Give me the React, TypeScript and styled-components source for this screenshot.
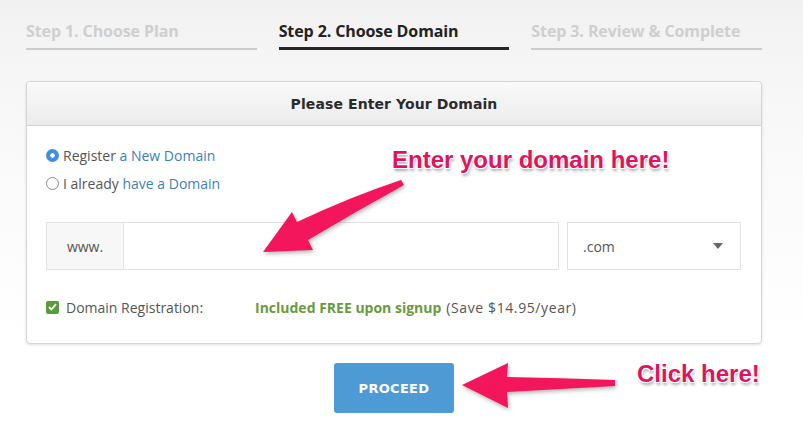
import styled, { createGlobalStyle } from "styled-components";

const GlobalStyle = createGlobalStyle`
    html, body {
        margin: 0;
        padding: 0;
        background: #fff;
    }
    * { box-sizing: border-box; }
`;

const Page = styled.div`
    position: relative;
    width: 803px;
    height: 435px;
    overflow: hidden;
    padding: 0 41px 0 26px;
    background: linear-gradient(180deg, #f1f1f1 0px, #f6f6f6 70px, #fbfbfb 200px, #fff 340px);
    font-family: "Open Sans", "Liberation Sans", sans-serif;
`;

const Steps = styled.div`
    display: grid;
    grid-template-columns: repeat(3, 1fr);
    column-gap: 22px;
    padding-top: 20px;
`;

const Step = styled.div<{ $active?: boolean }>`
    font-size: 16px;
    font-weight: 700;
    letter-spacing: -0.1px;
    color: ${(p) => (p.$active ? "#222" : "#cfcfcf")};
    line-height: 22px;
    padding-bottom: 6px;
    border-bottom: ${(p) => (p.$active ? "3px solid #262626" : "2px solid #cccccc")};
    height: 30px;
    white-space: nowrap;
`;

const Card = styled.div`
    margin-top: 31px;
    background: #fff;
    border: 1px solid #d6d6d6;
    border-radius: 4px;
    box-shadow: 0 1px 3px rgba(0, 0, 0, 0.12);
`;

const CardHeader = styled.div`
    height: 44px;
    display: flex;
    align-items: center;
    justify-content: center;
    background: linear-gradient(180deg, #f9f9f9, #ececec);
    border-bottom: 1px solid #cfcfcf;
    border-radius: 4px 4px 0 0;
    font-family: "DejaVu Sans", "Liberation Sans", sans-serif;
    font-weight: 700;
    font-size: 14px;
    letter-spacing: 0.1px;
    color: #2b2b2b;
`;

const CardBody = styled.div`
    padding: 15px 20px 22px 19px;
`;

const RadioRow = styled.label`
    display: flex;
    align-items: center;
    gap: 4px;
    height: 28px;
    font-size: 14px;
    color: #555;
`;

const Radio = styled.span<{ $checked?: boolean }>`
    width: 13px;
    height: 13px;
    border-radius: 50%;
    ${(p) =>
        p.$checked
            ? `background: radial-gradient(circle, #fff 0 2px, #3d8fe0 2.5px);`
            : `border: 1px solid #8a8a8a; background: #fff;`}
`;

const Link = styled.span`
    color: #3f7fb5;
`;

const InputGroup = styled.div`
    display: flex;
    gap: 8px;
    margin-top: 25px;
    height: 48px;
`;

const DomainBox = styled.div`
    flex: 1;
    display: flex;
    border: 1px solid #e2e2e2;
`;

const Prefix = styled.div`
    width: 77px;
    display: flex;
    align-items: center;
    justify-content: center;
    background: #f7f7f7;
    border-right: 1px solid #e2e2e2;
    color: #555;
    font-size: 14px;
`;

const DomainInput = styled.input`
    flex: 1;
    border: none;
    outline: none;
    background: #fff;
`;

const Select = styled.div`
    width: 174px;
    display: flex;
    align-items: center;
    justify-content: space-between;
    padding: 0 17px 0 15px;
    border: 1px solid #e2e2e2;
    color: #555;
    font-size: 14px;
`;

const CheckRow = styled.div`
    display: flex;
    align-items: center;
    height: 28px;
    margin-top: 23px;
    font-size: 14px;
    color: #555;
`;

const CheckBox = styled.span`
    width: 13px;
    height: 13px;
    border-radius: 2px;
    background: #5a9b3c;
    display: flex;
    align-items: center;
    justify-content: center;
    margin-right: 7px;
`;

const CheckLabel = styled.span`
    width: 189px;
`;

const Free = styled.span`
    color: #6a9a3f;
    font-weight: 700;
    margin-right: 5px;
`;

const Saving = styled.span`
    letter-spacing: 0.6px;
`;

const ButtonRow = styled.div`
    display: flex;
    justify-content: center;
    margin-top: 19px;
`;

const ProceedButton = styled.button`
    width: 120px;
    height: 50px;
    border: none;
    border-radius: 3px;
    background: #4d9ad5;
    color: #fff;
    font-family: "DejaVu Sans", "Liberation Sans", sans-serif;
    font-weight: 700;
    font-size: 13px;
    letter-spacing: 0.3px;
`;

const Callout = styled.div<{ $x: number; $y: number }>`
    position: absolute;
    left: ${(p) => p.$x}px;
    top: ${(p) => p.$y}px;
    font-family: "Liberation Sans", Arial, sans-serif;
    font-weight: 700;
    font-size: 24px;
    color: #e0145e;
    white-space: nowrap;
    text-shadow: -1px -1px 0 #fff, 1px -1px 0 #fff, -1px 1px 0 #fff, 1px 1px 0 #fff,
        1px 3px 3px rgba(0, 0, 0, 0.35);
`;

const ArrowSvg = styled.svg`
    position: absolute;
    left: 0;
    top: 0;
    pointer-events: none;
    filter: drop-shadow(1px 2px 2px rgba(0, 0, 0, 0.3));
`;

function App() {
    return (
        <Page>
            <GlobalStyle />
            <Steps>
                <Step>Step 1. Choose Plan</Step>
                <Step $active>Step 2. Choose Domain</Step>
                <Step>Step 3. Review &amp; Complete</Step>
            </Steps>
            <Card>
                <CardHeader>Please Enter Your Domain</CardHeader>
                <CardBody>
                    <RadioRow>
                        <Radio $checked />
                        <span>
                            Register <Link>a New Domain</Link>
                        </span>
                    </RadioRow>
                    <RadioRow>
                        <Radio />
                        <span>
                            I already <Link>have a Domain</Link>
                        </span>
                    </RadioRow>
                    <InputGroup>
                        <DomainBox>
                            <Prefix>www.</Prefix>
                            <DomainInput />
                        </DomainBox>
                        <Select>
                            <span>.com</span>
                            <svg width="10" height="6" viewBox="0 0 10 6">
                                <path d="M0 0 L10 0 L5 6 Z" fill="#666" />
                            </svg>
                        </Select>
                    </InputGroup>
                    <CheckRow>
                        <CheckBox>
                            <svg width="9" height="8" viewBox="0 0 9 8">
                                <path d="M1 4 L3.5 6.5 L8 1" stroke="#fff" strokeWidth="1.8" fill="none" />
                            </svg>
                        </CheckBox>
                        <CheckLabel>Domain Registration:</CheckLabel>
                        <Free>Included FREE upon signup</Free>
                        <Saving>(Save $14.95/year)</Saving>
                    </CheckRow>
                </CardBody>
            </Card>
            <ButtonRow>
                <ProceedButton>PROCEED</ProceedButton>
            </ButtonRow>

            <Callout $x={392} $y={146}>Enter your domain here!</Callout>
            <Callout $x={637} $y={360}>Click here!</Callout>

            <ArrowSvg width="803" height="435" viewBox="0 0 803 435">
                <path
                    d="M263 252 L292 212 L297 222 Q350 197 401 180 L404 185 Q355 212 308 240 L313 250 Z"
                    fill="#f3165c"
                />
                <path
                    d="M462 385 L508 363 L507 377 Q560 378 615 380 L615 386 Q560 389 507 392 L508 408 Z"
                    fill="#f3165c"
                />
            </ArrowSvg>
        </Page>
    );
}

export default App;
